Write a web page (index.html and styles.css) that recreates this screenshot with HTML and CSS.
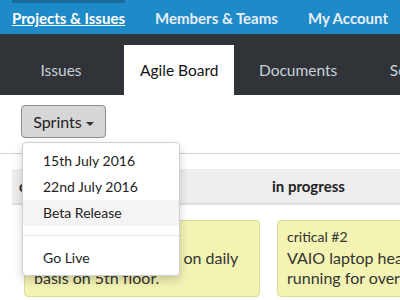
FILE: index.html
```html
<!DOCTYPE html>
<html lang="en">

<head>
  <meta charset="UTF-8" />
  <meta name="viewport" content="width=device-width, initial-scale=1.0" />
  <title>Agile Board</title>
  <link rel="stylesheet" href="styles.css">
</head>

<body>
  <header class="top_nav">
    <a class="top_link active" href="#">Projects &amp; Issues</a>
    <a class="top_link" href="#">Members &amp; Teams</a>
    <a class="top_link" href="#">My Account</a>
  </header>

  <nav class="tabs">
    <a class="tab" href="#">Issues</a>
    <a class="tab active" href="#">Agile Board</a>
    <a class="tab" href="#">Documents</a>
    <a class="tab" href="#">Settings</a>
  </nav>

  <div class="toolbar">
    <div class="dropdown">
      <button class="dropdown_toggle" type="button">Sprints <span class="caret"></span></button>
      <ul class="dropdown_menu">
        <li><a href="#">15th July 2016</a></li>
        <li><a href="#">22nd July 2016</a></li>
        <li class="hover"><a href="#">Beta Release</a></li>
        <li class="divider"></li>
        <li><a href="#">Go Live</a></li>
      </ul>
    </div>
  </div>

  <div class="board">
    <div class="column">
      <div class="column_head">open</div>
      <div class="card">
        <div class="card_tag">normal #1</div>
        <div class="card_text">Refill coffee machine on daily basis on 5th floor.</div>
      </div>
    </div>
    <div class="column">
      <div class="column_head">in progress</div>
      <div class="card">
        <div class="card_tag">critical #2</div>
        <div class="card_text">VAIO laptop heats up after running for over 1 hour.</div>
      </div>
    </div>
  </div>
</body>

</html>
```

FILE: styles.css
```css
body {
  font-family: "Lato", "Liberation Sans", sans-serif;
  margin: 0;
  width: 400px;
  height: 300px;
  overflow: hidden;
  background: #fff;
  color: #222;
}

a {
  text-decoration: none;
}

.top_nav {
  display: flex;
  gap: 30px;
  height: 34px;
  padding: 0 12px;
  background-color: #1f8ac8;
  white-space: nowrap;
}

.top_link {
  padding-top: 6px;
  border-top: 3px solid transparent;
  font-size: 15px;
  font-weight: 700;
  color: #e6eef6;
}

.top_link.active {
  border-top-color: #1b6a9c;
  color: #fff;
  text-decoration: underline;
}

.tabs {
  display: flex;
  align-items: flex-end;
  gap: 9px;
  height: 61px;
  padding-left: 6px;
  background-color: #303438;
  white-space: nowrap;
}

.tab {
  display: block;
  min-width: 110px;
  height: 50px;
  line-height: 50px;
  padding: 0 16px;
  box-sizing: border-box;
  text-align: center;
  font-size: 15.5px;
  color: #c9d1da;
}

.tab.active {
  margin-left: -1px;
  background-color: #fff;
  color: #111;
}

.toolbar {
  height: 59px;
  padding: 10px 0 0 21px;
  border-bottom: 1px solid #cfd3d6;
  box-sizing: border-box;
}

.dropdown {
  position: relative;
  display: inline-block;
}

.dropdown_toggle {
  height: 33px;
  width: 85px;
  padding: 0;
  font-family: inherit;
  font-size: 16px;
  color: #222;
  background-color: #d6d6d6;
  border: 1px solid #8d8d8d;
  border-radius: 4px;
}

.caret {
  display: inline-block;
  vertical-align: middle;
  border-top: 4px solid #333;
  border-left: 4px solid transparent;
  border-right: 4px solid transparent;
}

.dropdown_menu {
  position: absolute;
  top: 37px;
  left: 1px;
  z-index: 5;
  width: 158px;
  margin: 0;
  padding: 5px 0 4px;
  list-style: none;
  background: #fff;
  border: 1px solid #d0d0d0;
  border-radius: 4px;
  box-shadow: 0 4px 10px rgba(0, 0, 0, 0.18);
  box-sizing: border-box;
}

.dropdown_menu a {
  display: block;
  height: 26px;
  line-height: 26px;
  padding-left: 20px;
  font-size: 14px;
  color: #222;
  white-space: nowrap;
}

.dropdown_menu .hover a {
  background-color: #f4f4f4;
}

.divider {
  height: 1px;
  margin: 9px 0;
  background-color: #e3e3e3;
}

.board {
  display: flex;
  padding: 15px 0 0 12px;
}

.column {
  flex: 0 0 253px;
  min-width: 0;
}

.column_head {
  height: 34px;
  line-height: 34px;
  padding-left: 7px;
  font-size: 15px;
  font-weight: 700;
  background-color: #ededed;
  border-bottom: 2px solid #dedede;
}

.card {
  margin: 15px 5px 0 12px;
  padding: 7px 9px 8px;
  background-color: #f3f3b3;
  border: 1px solid #dcdc9a;
  border-radius: 4px;
}

.card_tag {
  font-size: 14px;
  color: #333;
  white-space: nowrap;
}

.card_text {
  margin-top: 3px;
  font-size: 16px;
  line-height: 20px;
  color: #333;
}
```
